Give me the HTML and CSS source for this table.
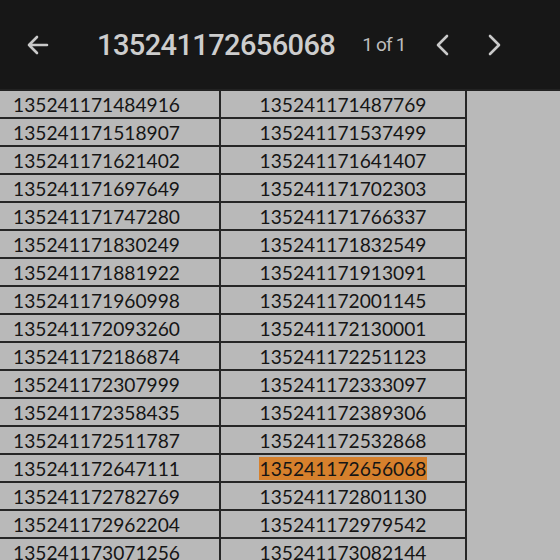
FILE: index.html
```html
<!DOCTYPE html>
<html lang="en">
<head>
    <meta charset="UTF-8">
    <meta name="viewport" content="width=device-width, initial-scale=1.0">
    <title>Find in sheet</title>
    <link rel="stylesheet" href="styles.css">
</head>
<body>
    <header class="find-bar">
        <button class="icon-btn back-btn" aria-label="Back">
            <svg width="26" height="26" viewBox="0 0 26 26"><path d="M22 13H4M12 5l-8 8 8 8" fill="none" stroke="#c9c9c9" stroke-width="2.6" stroke-linecap="round" stroke-linejoin="round"/></svg>
        </button>
        <div class="query">135241172656068</div>
        <div class="count">1 of 1</div>
        <button class="icon-btn prev-btn" aria-label="Previous">
            <svg width="16" height="24" viewBox="0 0 16 24"><path d="M13 3L4 12l9 9" fill="none" stroke="#c9c9c9" stroke-width="2.6" stroke-linecap="round" stroke-linejoin="round"/></svg>
        </button>
        <button class="icon-btn" aria-label="Next">
            <svg width="16" height="24" viewBox="0 0 16 24"><path d="M3 3l9 9-9 9" fill="none" stroke="#c9c9c9" stroke-width="2.6" stroke-linecap="round" stroke-linejoin="round"/></svg>
        </button>
    </header>

    <div class="sheet">
        <table class="grid">
            <tr><td>135241171484916</td><td class="c">135241171487769</td></tr>
            <tr><td>135241171518907</td><td class="c">135241171537499</td></tr>
            <tr><td>135241171621402</td><td class="c">135241171641407</td></tr>
            <tr><td>135241171697649</td><td class="c">135241171702303</td></tr>
            <tr><td>135241171747280</td><td class="c">135241171766337</td></tr>
            <tr><td>135241171830249</td><td class="c">135241171832549</td></tr>
            <tr><td>135241171881922</td><td class="c">135241171913091</td></tr>
            <tr><td>135241171960998</td><td class="c">135241172001145</td></tr>
            <tr><td>135241172093260</td><td class="c">135241172130001</td></tr>
            <tr><td>135241172186874</td><td class="c">135241172251123</td></tr>
            <tr><td>135241172307999</td><td class="c">135241172333097</td></tr>
            <tr><td>135241172358435</td><td class="c">135241172389306</td></tr>
            <tr><td>135241172511787</td><td class="c">135241172532868</td></tr>
            <tr><td>135241172647111</td><td class="c"><span class="hit">135241172656068</span></td></tr>
            <tr><td>135241172782769</td><td class="c">135241172801130</td></tr>
            <tr><td>135241172962204</td><td class="c">135241172979542</td></tr>
            <tr><td>135241173071256</td><td class="c">135241173082144</td></tr>
        </table>
    </div>
</body>
</html>
```

FILE: styles.css
```css
body {
    margin: 0;
    padding: 0;
    background: #b9b9b9;
    font-family: 'Lato', 'Liberation Sans', sans-serif;
    overflow: hidden;
    height: 560px;
}
.find-bar {
    height: 89px;
    background: #171717;
    display: flex;
    align-items: center;
    padding: 0 14px 0 25px;
    color: #c9c9c9;
}
.icon-btn {
    background: none;
    border: none;
    padding: 0;
    display: flex;
    align-items: center;
    justify-content: center;
    width: 40px;
    height: 40px;
    cursor: pointer;
}
.back-btn {
    width: 26px;
    margin-right: 46px;
}
.query {
    font-family: 'Roboto', sans-serif;
    font-size: 29px;
    font-weight: 500;
    letter-spacing: -0.6px;
    color: #cdcdcd;
}
.count {
    font-family: 'Roboto', sans-serif;
    font-size: 19px;
    letter-spacing: -0.8px;
    color: #bdbdbd;
    margin-left: 27px;
    margin-right: 16px;
}
.prev-btn {
    margin-right: 13px;
}
.sheet {
    border-top: 2px solid #222;
}
.grid {
    border-collapse: collapse;
    font-size: 19.2px;
    color: #151515;
}
.grid td {
    height: 25px;
    padding: 1px 0 0 13px;
    width: 206px;
    border: 2px solid #262626;
    border-top: none;
    border-left: none;
    line-height: 25px;
}
.grid td.c {
    width: 244px;
    padding: 1px 0 0 0;
    text-align: center;
}
.hit {
    background: #d6802c;
    padding: 0 1px;
}
```
